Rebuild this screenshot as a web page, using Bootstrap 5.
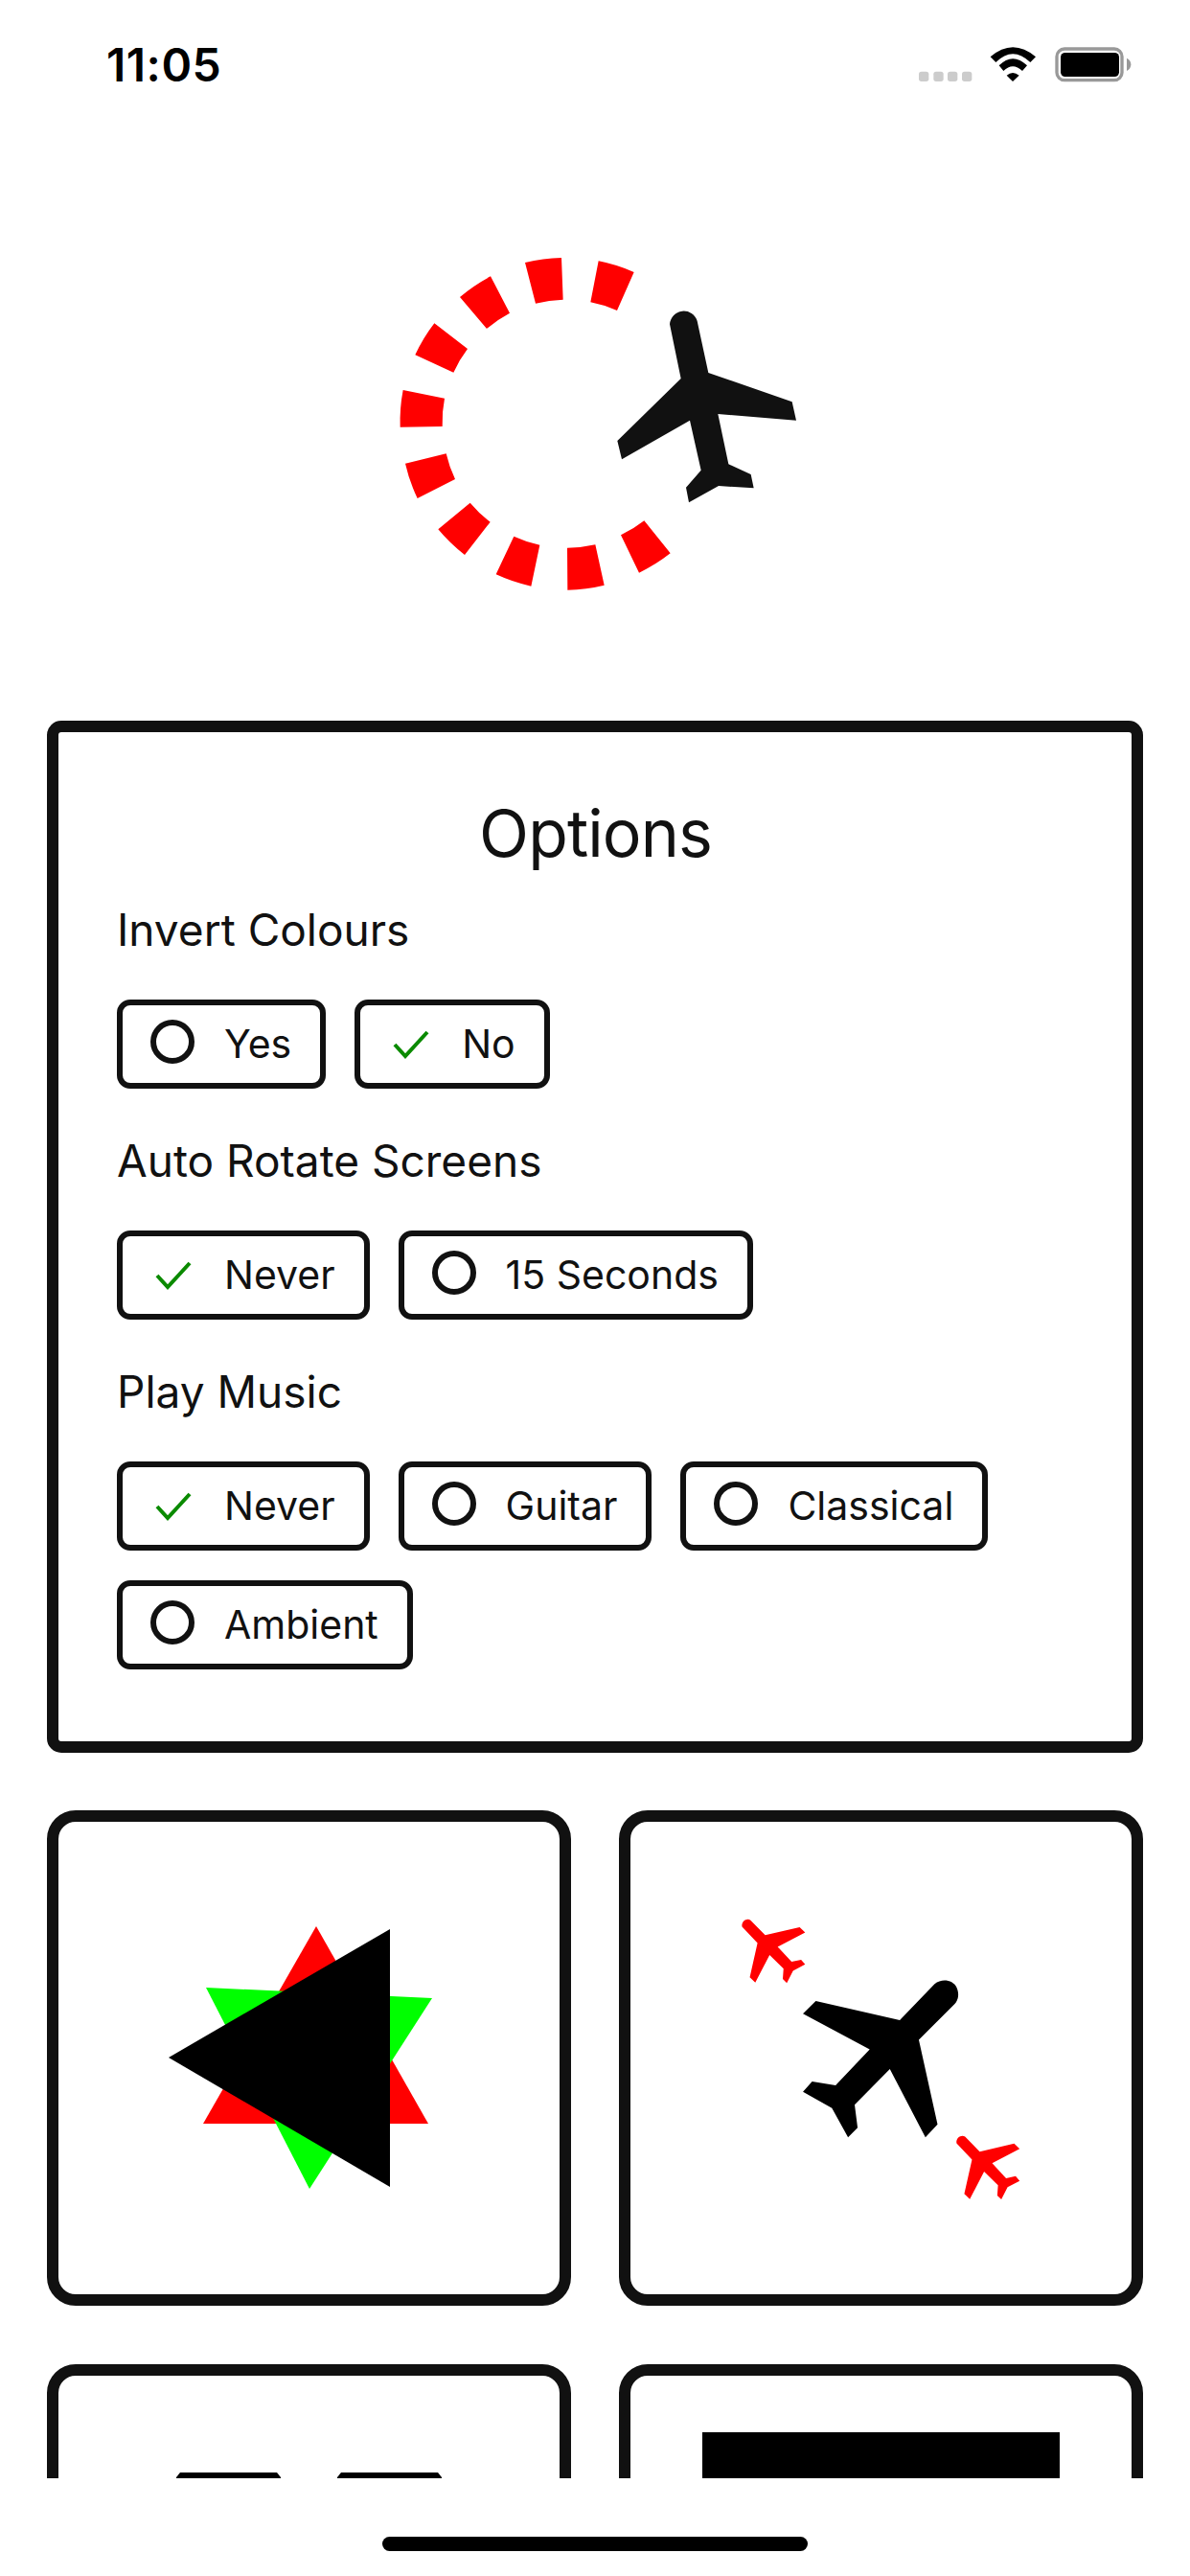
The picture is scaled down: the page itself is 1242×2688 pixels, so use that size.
<!DOCTYPE html>
<html lang="en">
<head>
<meta charset="utf-8">
<title>Options</title>
<link rel="stylesheet" href="https://cdn.jsdelivr.net/npm/bootstrap@5.3.0/dist/css/bootstrap.min.css">
<style>
html, body { background: #fff; }
body { width: 1242px; height: 2688px; overflow: hidden; font-family: Inter, "Liberation Sans", sans-serif; color: #111; }
.scroll-clip { height: 2586px; overflow: hidden; }
.status-row { height: 132px; padding: 30px 50px 0 111px; }
.clock { font-weight: 600; font-size: 48px; line-height: 76px; color: #000; letter-spacing: .5px; }
.status-icons { width: 260px; height: 70px; display: block; }
.hero-wrap { padding-top: 118px; margin-bottom: 122px; }
.hero-art { width: 482px; height: 380px; display: block; }
.options-panel { margin: 0 49px 60px 49px; border: 12px solid #111; border-radius: 15px; padding: 65px 60px 75px 61px; }
.panel-title { font-size: 68px; line-height: 80px; font-weight: 400; letter-spacing: -.9px; margin: 0; text-align: center; }
.opt-group { margin-top: 31px; }
.opt-group + .opt-group { margin-top: 45px; }
.opt-label { font-size: 46px; line-height: 60px; letter-spacing: 0; margin-bottom: 43px; }
.opt-btns { gap: 31px 30px; }
.opt-btn { height: 93px; border: 6px solid #111; border-radius: 14px; padding: 0 30px 0 29px; font-size: 41px; line-height: 1; color: #111; background: #fff; letter-spacing: 0; gap: 31px; }
.opt-btn:hover, .opt-btn:active { border-color: #111; color: #111; background: #fff; }
.opt-ic { width: 46px; height: 46px; display: block; flex: none; margin-top: -5px; }
.tile-grid { display: grid; grid-template-columns: 547px 547px; gap: 61px 50px; margin: 0 49px; }
.tile-box { height: 517px; border: 12px solid #111; border-radius: 30px; overflow: hidden; background: #fff; }
.tile-art { width: 100%; height: 100%; display: block; }
.home-pill { width: 444px; height: 15px; margin: 61px auto 0; background: #000; border-radius: 8px; }
</style>
</head>
<body>
<div class="scroll-clip">
  <div class="status-row d-flex justify-content-between align-items-start">
    <span class="clock">11:05</span>
    <svg class="status-icons" viewBox="0 0 780 210" aria-hidden="true">
      <g fill="#ccc">
        <rect x="81" y="134" width="31" height="31" rx="8"/><rect x="127" y="134" width="31" height="31" rx="8"/>
        <rect x="171" y="134" width="31" height="31" rx="8"/><rect x="216" y="134" width="31" height="31" rx="8"/>
      </g>
      <g fill="#000">
        <path d="M305 88Q375 28 447 88L430 105Q375 52 322 105Z"/>
        <path d="M332 115Q375 72 420 115L405 132Q375 103 346 132Z"/>
        <path d="M356 146Q375 130 395 146L375 165Z"/>
      </g>
      <rect x="513" y="63" width="204" height="98" rx="24" fill="none" stroke="#999" stroke-width="10"/>
      <rect x="525" y="75" width="183" height="75" rx="14" fill="#000"/>
      <path d="M732 92Q745 98 745 112Q745 126 732 132Z" fill="#999"/>
    </svg>
  </div>

  <div class="hero-wrap d-flex justify-content-center">
    <svg class="hero-art" viewBox="0 0 1446 1140" aria-hidden="true">
      <g fill="#f00">
        <path d="M504 72A520 520 0 0 1 618 57L623 188A388 388 0 0 0 537 200Z"/>
        <path d="M734 67A520 520 0 0 1 845 102L792 222A388 388 0 0 0 709 196Z"/>
        <path d="M300 180A520 520 0 0 1 396 115L456 230A388 388 0 0 0 384 279Z"/>
        <path d="M160 361A520 520 0 0 1 220 262L324 342A388 388 0 0 0 280 416Z"/>
        <path d="M113 587A520 520 0 0 1 122 471L252 497A388 388 0 0 0 245 585Z"/>
        <path d="M167 810A520 520 0 0 1 129 701L257 670A388 388 0 0 0 285 750Z"/>
        <path d="M315 987A520 520 0 0 1 232 907L332 824A388 388 0 0 0 395 884Z"/>
        <path d="M523 1085A520 520 0 0 1 413 1048L469 929A388 388 0 0 0 550 956Z"/>
        <path d="M752 1082A520 520 0 0 1 637 1097L636 965A388 388 0 0 0 724 955Z"/>
        <path d="M959 982A520 520 0 0 1 861 1043L804 925A388 388 0 0 0 877 880Z"/>
      </g>
      <path fill="#111" d="M992 435L793 630L807 688L1020 566L1055 722L1008 776L1017 823L1110 771L1220 778L1211 735L1141 703L1108 546L1353 566L1340 508L1078 417L1043 255A44 44 0 0 0 957 265Z"/>
    </svg>
  </div>

  <section class="options-panel">
    <h1 class="panel-title">Options</h1>

    <div class="opt-group">
      <div class="opt-label">Invert Colours</div>
      <div class="opt-btns d-flex flex-wrap">
        <button type="button" class="btn opt-btn d-inline-flex align-items-center"><svg class="opt-ic" viewBox="0 0 46 46"><circle cx="23" cy="23" r="20" fill="none" stroke="#111" stroke-width="6"/></svg>Yes</button>
        <button type="button" class="btn opt-btn d-inline-flex align-items-center"><svg class="opt-ic" viewBox="0 0 46 46"><path d="M7 26L18 38L41 13" fill="none" stroke="#0a8a00" stroke-width="4"/></svg>No</button>
      </div>
    </div>

    <div class="opt-group">
      <div class="opt-label">Auto Rotate Screens</div>
      <div class="opt-btns d-flex flex-wrap">
        <button type="button" class="btn opt-btn d-inline-flex align-items-center"><svg class="opt-ic" viewBox="0 0 46 46"><path d="M7 26L18 38L41 13" fill="none" stroke="#0a8a00" stroke-width="4"/></svg>Never</button>
        <button type="button" class="btn opt-btn d-inline-flex align-items-center"><svg class="opt-ic" viewBox="0 0 46 46"><circle cx="23" cy="23" r="20" fill="none" stroke="#111" stroke-width="6"/></svg>15 Seconds</button>
      </div>
    </div>

    <div class="opt-group">
      <div class="opt-label">Play Music</div>
      <div class="opt-btns d-flex flex-wrap">
        <button type="button" class="btn opt-btn d-inline-flex align-items-center"><svg class="opt-ic" viewBox="0 0 46 46"><path d="M7 26L18 38L41 13" fill="none" stroke="#0a8a00" stroke-width="4"/></svg>Never</button>
        <button type="button" class="btn opt-btn d-inline-flex align-items-center"><svg class="opt-ic" viewBox="0 0 46 46"><circle cx="23" cy="23" r="20" fill="none" stroke="#111" stroke-width="6"/></svg>Guitar</button>
        <button type="button" class="btn opt-btn d-inline-flex align-items-center"><svg class="opt-ic" viewBox="0 0 46 46"><circle cx="23" cy="23" r="20" fill="none" stroke="#111" stroke-width="6"/></svg>Classical</button>
        <button type="button" class="btn opt-btn d-inline-flex align-items-center"><svg class="opt-ic" viewBox="0 0 46 46"><circle cx="23" cy="23" r="20" fill="none" stroke="#111" stroke-width="6"/></svg>Ambient</button>
      </div>
    </div>
  </section>

  <div class="tile-grid">
    <div class="tile-box">
      <svg class="tile-art" viewBox="12 12 523 493" aria-hidden="true">
        <polygon fill="#f00" points="281,121 163,327 398,327"/>
        <polygon fill="#0f0" points="166,185 402,196 274,395"/>
        <polygon fill="#000" points="127,258 358,124 358,393"/>
      </svg>
    </div>
    <div class="tile-box">
      <svg class="tile-art" viewBox="12 12 523 493" aria-hidden="true">
        <g transform="translate(-15 -20) scale(.3827 .347)">
          <path fill="#000" d="M805 689L900 580C920 562 950 568 960 590C968 610 965 628 955 640L857 748L908 1002L875 1041L778 836L682 943L690 1012L664 1041L620 953L541 904L566 873L630 885L723 777L541 669L576 631Z"/>
          <path id="mini-plane" fill="#f00" d="M438 433L398 388C388 380 372 392 375 408L417 457L396 560L411 576L450 493L488 534L486 565L497 577L514 540L547 521L536 507L510 513L472 468L547 425L532 409Z"/>
          <use href="#mini-plane" x="585" y="651"/>
        </g>
      </svg>
    </div>
    <div class="tile-box">
      <svg class="tile-art" viewBox="12 12 523 493" aria-hidden="true">
        <path fill="#000" d="M135 118L139 113H240L244 118V300H135Z"/>
        <path fill="#000" d="M303 118L307 113H408L412 118V300H303Z"/>
      </svg>
    </div>
    <div class="tile-box">
      <svg class="tile-art" viewBox="12 12 523 493" aria-hidden="true">
        <rect x="87" y="71" width="373" height="300" fill="#000"/>
      </svg>
    </div>
  </div>
</div>
<div class="home-pill"></div>
<script src="https://cdn.jsdelivr.net/npm/bootstrap@5.3.0/dist/js/bootstrap.bundle.min.js"></script>
</body>
</html>
